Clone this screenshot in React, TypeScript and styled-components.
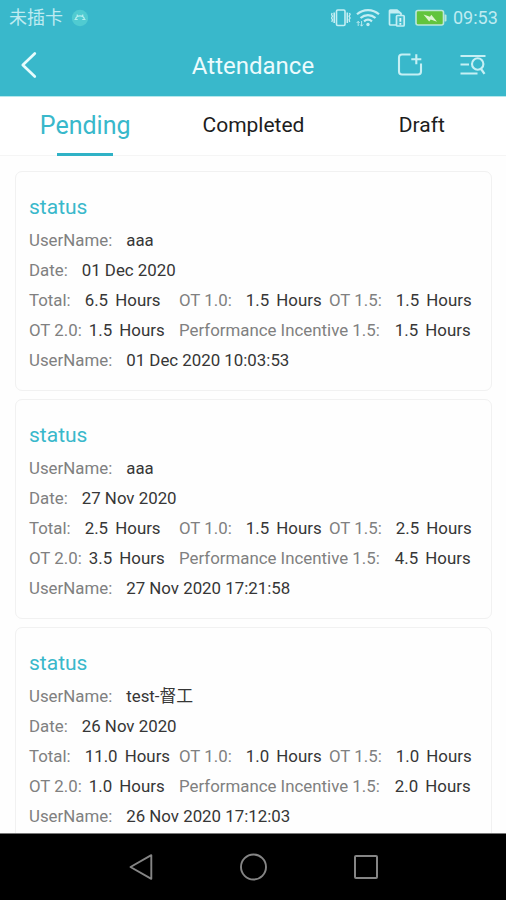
import React from 'react';
import styled, { createGlobalStyle } from 'styled-components';

const teal = '#39b8cb';

const GlobalStyle = createGlobalStyle`
  * { box-sizing: border-box; }
  body { margin: 0; background: #fff; font-family: Roboto, "Noto Sans CJK SC", sans-serif; }
`;

const Screen = styled.div`
  width: 506px;
  height: 900px;
  display: flex;
  flex-direction: column;
  overflow: hidden;
  background: #fefefe;
`;

const Header = styled.header`
  height: 97px;
  flex: none;
  background: ${teal};
  border-bottom: 1px solid #b5e8ec;
`;

const StatusBar = styled.div`
  height: 36px;
  padding: 0 8px 0 9px;
  display: flex;
  align-items: center;
  color: #bfebf1;
`;

const Carrier = styled.span`
  font-size: 18px;
  line-height: 36px;
  margin-right: 8px;
`;

const StatusIcons = styled.div`
  margin-left: auto;
  display: flex;
  align-items: center;
`;

const Spacer = styled.span<{ $w: number }>`
  width: ${(p) => p.$w}px;
`;

const Clock = styled.span`
  font-size: 18px;
  line-height: 36px;
  margin-left: 6px;
  width: 45px;
`;

const TitleBar = styled.div`
  height: 58px;
  display: grid;
  grid-template-columns: 128px 1fr 128px;
  align-items: center;
`;

const Title = styled.h1`
  margin: 0;
  padding-top: 2px;
  text-align: center;
  font-size: 24px;
  line-height: 56px;
  font-weight: 400;
  color: #ecfbfd;
`;

const IconButton = styled.button`
  padding: 0;
  border: 0;
  background: none;
  display: flex;
`;

const BackSlot = styled.div`
  padding-left: 20px;
`;

const Actions = styled.div`
  display: flex;
  gap: 35px;
  padding-left: 18px;
`;

const Tabs = styled.nav`
  height: 59px;
  flex: none;
  display: grid;
  grid-template-columns: repeat(3, 1fr);
  padding-left: 1px;
  border-bottom: 1px solid #f5f5f5;
  background: #fff;
`;

const Tab = styled.div<{ $active?: boolean }>`
  display: flex;
  flex-direction: column;
  align-items: center;
  font-size: ${(p) => (p.$active ? '25px' : '21px')};
  line-height: ${(p) => (p.$active ? '58px' : '57px')};
  height: 59px;
  color: ${(p) => (p.$active ? teal : '#1d1d1d')};
`;

const TabLabel = styled.span`
  height: 56px;
`;

const Indicator = styled.span`
  width: 56px;
  height: 3px;
  flex: none;
  background: #2fb2c6;
`;

const List = styled.main`
  flex: 1;
  min-height: 0;
  overflow: hidden;
  padding: 15px 14px 0 15px;
  display: flex;
  flex-direction: column;
  gap: 8px;
`;

const Card = styled.article`
  height: 220px;
  flex: none;
  border: 1px solid #f1f1f1;
  border-radius: 7px;
  padding: 17px 0 0 13px;
  background: #fefefe;
`;

const CardTitle = styled.h2`
  margin: 0 0 1px;
  height: 35px;
  font-size: 21px;
  line-height: 36px;
  font-weight: 400;
  color: ${teal};
`;

const Row = styled.div`
  height: 30px;
  display: grid;
  grid-template-columns: 150px 150px 1fr;
  font-size: 16.85px;
  line-height: 30px;
  white-space: nowrap;
`;

const Field = styled.div<{ $span?: number; $gap?: number }>`
  grid-column: span ${(p) => p.$span ?? 1};
  display: flex;
  gap: ${(p) => p.$gap ?? 14}px;
`;

const Label = styled.span`
  color: #808080;
`;

const Value = styled.span`
  color: #363636;
`;

const Amount = styled(Value)`
  word-spacing: 3px;
`;

const NavBar = styled.footer`
  height: 67px;
  flex: none;
  background: #000;
  border-top: 1px solid #777;
  display: flex;
  align-items: center;
  justify-content: center;
  gap: 84px;
`;

type Entry = {
  user: string;
  date: string;
  total: string;
  ot10: string;
  ot15: string;
  ot20: string;
  incentive: string;
  stamp: string;
};

const entries: Entry[] = [
  { user: 'aaa', date: '01 Dec 2020', total: '6.5', ot10: '1.5', ot15: '1.5', ot20: '1.5', incentive: '1.5', stamp: '01 Dec 2020 10:03:53' },
  { user: 'aaa', date: '27 Nov 2020', total: '2.5', ot10: '1.5', ot15: '2.5', ot20: '3.5', incentive: '4.5', stamp: '27 Nov 2020 17:21:58' },
  { user: 'test-督工', date: '26 Nov 2020', total: '11.0', ot10: '1.0', ot15: '1.0', ot20: '1.0', incentive: '2.0', stamp: '26 Nov 2020 17:12:03' },
];

type HoursProps = { label: string; hours: string; span?: number; gap?: number };

const Hours = ({ label, hours, span, gap }: HoursProps) => (
  <Field $span={span} $gap={gap}>
    <Label>{label}</Label>
    <Amount>{hours} Hours</Amount>
  </Field>
);

const Detail = ({ label, value }: { label: string; value: string }) => (
  <Row>
    <Field $span={3}>
      <Label>{label}</Label>
      <Value>{value}</Value>
    </Field>
  </Row>
);

const AndroidBadge = () => (
  <svg width="18" height="18" viewBox="0 0 18 18" fill="none">
    <circle cx="9" cy="9" r="8.2" fill="#50cbd1" />
    <path d="M4.500 10.500c.4-2.600 2.300-3.700 4.500-3.700s4.100 1.100 4.500 3.700M5.800 5.600l1.200 1.800M12.200 5.600l-1.200 1.800M3.500 10.500h3.200M11.300 10.500h3.200" stroke="#b4eeef" strokeWidth="1.200" />
  </svg>
);

const VibrateIcon = () => (
  <svg width="20" height="20" viewBox="0 0 20 20" fill="none" stroke="#c4eef3" strokeWidth="1.6">
    <rect x="5.500" y="2" width="8.500" height="15.500" rx="1.200" />
    <path d="M3.200 4.500v10.500M16.300 4.500v10.500" />
    <path d="M1.200 5l-.7 1.500 1 1.700-1 1.800 1 1.700-.7 2.300M18.500 5l.6 1.500-1 1.700 1 1.800-1 1.700.6 2.300" strokeWidth="1.300" />
  </svg>
);

const WifiIcon = () => (
  <svg width="24" height="20" viewBox="0 0 24 20" fill="none" stroke="#c4eef3" strokeWidth="2.2">
    <path d="M1 6.300c6.200-5.700 15.800-5.700 22 0M4.500 10c4.300-3.800 10.700-3.800 15 0M8 13.400c2.400-2 5.600-2 8 0" />
    <circle cx="12" cy="16.500" r="1.700" fill="#c4eef3" stroke="none" />
    <path d="M2.200 18v-4.500M.7 15l1.500-1.700L3.700 15M5.600 13v5M4.100 16.500l1.500 1.700 1.500-1.700" strokeWidth=".9" />
  </svg>
);

const SimIcon = () => (
  <svg width="18" height="20" viewBox="0 0 18 20" fill="none">
    <path d="M8 17H2.500Q1.500 17 1.500 16V3Q1.500 2 2.500 2H9l4 3.500V7" stroke="#c4eef3" strokeWidth="1.700" />
    <path d="M2 2h7l4 3.500H2z" fill="#c4eef3" />
    <rect x="8.500" y="7.500" width="7.700" height="10.500" rx="1" fill="#48bfd0" stroke="#c4eef3" strokeWidth="1.700" />
    <path d="M12.350 10v3.700M12.350 15v1.700" stroke="#e0f7fa" strokeWidth="1.800" />
  </svg>
);

const BatteryIcon = () => (
  <svg width="32" height="20" viewBox="0 0 32 20" fill="none">
    <rect x="1" y="2.500" width="27.500" height="14.500" rx="2" fill="#62c43d" stroke="#bce8da" strokeWidth="1.600" />
    <path d="M29.500 6.500h1q1 0 1 1v5q0 1-1 1h-1z" fill="#bce8da" />
    <path d="M8.500 6.500l6.500 2.200 1.300-2 5.700 7.100-6.300-2.300-1.500 2z" fill="#def5d2" />
  </svg>
);

const BackIcon = () => (
  <svg width="18" height="28" viewBox="0 0 18 28" fill="none" stroke="#e8fcfd" strokeWidth="2.700" strokeLinecap="round" strokeLinejoin="round">
    <path d="M14.800 2.500L2.800 14l12 11.500" />
  </svg>
);

const AddIcon = () => (
  <svg width="28" height="26" viewBox="0 0 28 26" fill="none" stroke="#c6eff4" strokeWidth="2.100">
    <path d="M14.500 2.500H6Q3 2.500 3 5.500v14q0 3 3 3h16q3 0 3-3v-8" />
    <path d="M20.300 2.300v10M15.300 7.300h10" />
  </svg>
);

const SearchListIcon = () => (
  <svg width="28" height="26" viewBox="0 0 28 26" fill="none" stroke="#c6eff4" strokeWidth="2.100">
    <path d="M1.500 4h25M1.500 12.500h8.500M1.500 21.500h17" />
    <circle cx="18.700" cy="12" r="5.700" />
    <path d="M22 16.800l3.500 5" strokeWidth="2.300" />
  </svg>
);

const NavTriangle = () => (
  <svg width="28" height="30" viewBox="0 0 28 30" fill="none" stroke="#858585" strokeWidth="1.900" strokeLinejoin="round">
    <path d="M4.500 15L25.300 3.200v23.600z" />
  </svg>
);

const NavCircle = () => (
  <svg width="30" height="30" viewBox="0 0 30 30" fill="none" stroke="#858585" strokeWidth="1.900">
    <circle cx="15.500" cy="15" r="12.500" />
  </svg>
);

const NavSquare = () => (
  <svg width="28" height="30" viewBox="0 0 28 30" fill="none" stroke="#858585" strokeWidth="2">
    <rect x="3" y="4" width="22" height="22" rx="1" />
  </svg>
);

export default function App() {
  return (
    <>
      <GlobalStyle />
      <Screen>
        <Header>
          <StatusBar>
            <Carrier>未插卡</Carrier>
            <AndroidBadge />
            <StatusIcons>
              <VibrateIcon />
              <Spacer $w={5} />
              <WifiIcon />
              <Spacer $w={8} />
              <SimIcon />
              <Spacer $w={9} />
              <BatteryIcon />
              <Clock>09:53</Clock>
            </StatusIcons>
          </StatusBar>
          <TitleBar>
            <BackSlot>
              <IconButton aria-label="Back"><BackIcon /></IconButton>
            </BackSlot>
            <Title>Attendance</Title>
            <Actions>
              <IconButton aria-label="Add"><AddIcon /></IconButton>
              <IconButton aria-label="Search"><SearchListIcon /></IconButton>
            </Actions>
          </TitleBar>
        </Header>
        <Tabs>
          <Tab $active><TabLabel>Pending</TabLabel><Indicator /></Tab>
          <Tab><TabLabel>Completed</TabLabel></Tab>
          <Tab><TabLabel>Draft</TabLabel></Tab>
        </Tabs>
        <List>
          {entries.map((e) => (
            <Card key={e.stamp}>
              <CardTitle>status</CardTitle>
              <Detail label="UserName:" value={e.user} />
              <Detail label="Date:" value={e.date} />
              <Row>
                <Hours label="Total:" hours={e.total} />
                <Hours label="OT 1.0:" hours={e.ot10} />
                <Hours label="OT 1.5:" hours={e.ot15} />
              </Row>
              <Row>
                <Hours label="OT 2.0:" hours={e.ot20} gap={7} />
                <Hours label="Performance Incentive 1.5:" hours={e.incentive} span={2} gap={15} />
              </Row>
              <Detail label="UserName:" value={e.stamp} />
            </Card>
          ))}
        </List>
        <NavBar>
          <NavTriangle />
          <NavCircle />
          <NavSquare />
        </NavBar>
      </Screen>
    </>
  );
}
